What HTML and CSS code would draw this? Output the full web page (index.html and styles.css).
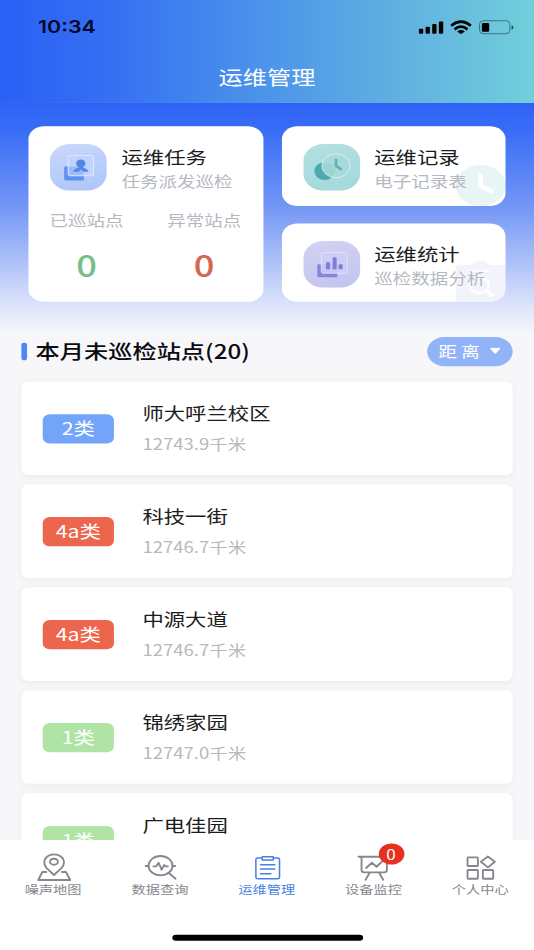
FILE: index.html
```html
<!DOCTYPE html>
<html lang="zh-CN">
<head>
<meta charset="utf-8">
<title>运维管理</title>
<link rel="stylesheet" href="styles.css">
</head>
<body>
<div class="screen">
  <header class="header">
    <div class="status">
      <span class="time">10:34</span>
      <svg class="status-icons" viewBox="450 55 295 50" preserveAspectRatio="none">
        <rect x="455" y="85" width="13" height="15" rx="3"/>
        <rect x="475" y="79" width="13" height="21" rx="3"/>
        <rect x="495" y="71" width="13" height="29" rx="3"/>
        <rect x="515" y="63" width="13" height="37" rx="3"/>
        <g fill="none" stroke="#000" stroke-width="8">
          <path d="M552 76Q581 52 611 76"/>
          <path d="M562 87Q581 71 601 87"/>
        </g>
        <path d="M570 93Q581 85 593 93L584 99Q581 101 578 99Z"/>
        <rect x="637" y="61" width="91" height="39" rx="11" fill="none" stroke="#000" stroke-opacity=".5" stroke-width="2.5"/>
        <rect x="644" y="68" width="22" height="26" rx="4"/>
        <path d="M733 74Q739 76 739 81Q739 86 733 88Z" fill-opacity=".6"/>
      </svg>
    </div>
    <h1 class="title">运维管理</h1>
  </header>

  <main class="content">
    <section class="cards">
      <article class="card task">
        <div class="card-head">
          <svg class="card-icon" viewBox="90 87 171 141" preserveAspectRatio="none">
            <defs><linearGradient id="blue" x1="0" y1="0" x2=".3" y2="1"><stop stop-color="#cbd8fa"/><stop offset="1" stop-color="#b0c8f9"/></linearGradient></defs>
            <rect x="90" y="87" width="171" height="141" rx="62" ry="52" fill="url(#blue)"/>
            <path d="M137 155H192V197H137Q133 197 133 193V159Q133 155 137 155Z" fill="#5f91ef"/>
            <rect x="145" y="122" width="76" height="61" rx="5" fill="#c1d3fb" fill-opacity=".85" stroke="#e9effe" stroke-width="2.5"/>
            <path d="M148 156H191V181H148Z" fill="#83a9f3" fill-opacity=".45"/>
            <ellipse cx="183" cy="146" rx="14" ry="12" fill="#5386e9"/>
            <path d="M177 153H190V159Q205 163 206 171H191L183 164L177 171H160Q162 162 177 159Z" fill="#5386e9"/>
          </svg>
          <div class="card-text">
            <h2>运维任务</h2>
            <p>任务派发巡检</p>
          </div>
        </div>
        <dl class="counts">
          <div><dt>已巡站点</dt><dd class="ok">0</dd></div>
          <div><dt>异常站点</dt><dd class="bad">0</dd></div>
        </dl>
      </article>

      <div class="side">
        <article class="card">
          <svg class="mark" viewBox="557 149 150 123" preserveAspectRatio="none">
            <ellipse cx="632" cy="211" rx="75" ry="62" fill="#b0dede" fill-opacity=".3"/>
            <path d="M632 182V212L664 228" fill="none" stroke="#fff" stroke-width="14" stroke-linecap="round" stroke-linejoin="round"/>
          </svg>
          <div class="card-head">
            <svg class="card-icon" viewBox="99 87 171 141" preserveAspectRatio="none">
              <defs><linearGradient id="teal" x1="0" y1="0" x2=".3" y2="1"><stop stop-color="#b5e0e2"/><stop offset="1" stop-color="#a4dadd"/></linearGradient></defs>
              <rect x="99" y="87" width="171" height="141" rx="62" ry="52" fill="url(#teal)"/>
              <ellipse cx="163" cy="169" rx="31" ry="27" fill="#4daaae"/>
              <ellipse cx="197" cy="153" rx="42" ry="36" fill="#a9d9da" fill-opacity=".87" stroke="#dff4f4" stroke-width="2.5"/>
              <path d="M197 135V153L212 163" fill="none" stroke="#5eb3b7" stroke-width="8" stroke-linecap="round" stroke-linejoin="round"/>
            </svg>
            <div class="card-text">
              <h2>运维记录</h2>
              <p>电子记录表</p>
            </div>
          </div>
        </article>
        <article class="card">
          <svg class="mark" viewBox="557 438 150 123" preserveAspectRatio="none">
            <path d="M557 455Q557 450 564 450H605Q610 450 613 445Q616 439 623 439H640Q647 439 651 445Q653 450 659 450H707V561H557Z" fill="#c8c8ee" fill-opacity=".22"/>
            <path d="M605 468H655" fill="none" stroke="#fff" stroke-opacity=".8" stroke-width="7" stroke-linecap="round"/>
            <ellipse cx="628" cy="511" rx="28" ry="23" fill="none" stroke="#fff" stroke-opacity=".8" stroke-width="9"/>
            <path d="M648 527L666 541" stroke="#fff" stroke-width="10" stroke-linecap="round"/>
          </svg>
          <div class="card-head">
            <svg class="card-icon" viewBox="99 377 171 141" preserveAspectRatio="none">
              <defs><linearGradient id="violet" x1="0" y1="0" x2=".3" y2="1"><stop stop-color="#d2d2f2"/><stop offset="1" stop-color="#c5c6ef"/></linearGradient></defs>
              <rect x="99" y="377" width="171" height="141" rx="62" ry="52" fill="url(#violet)"/>
              <path d="M145 447H201V486H145Q141 486 141 482V451Q141 447 145 447Z" fill="#8684dc"/>
              <rect x="153" y="412" width="78" height="62" rx="5" fill="#cdcef2" fill-opacity=".88" stroke="#e6e6fa" stroke-width="2.5"/>
              <path d="M167 443Q167 441 169 441H177Q179 441 179 443V462H167ZM187 429Q187 426 190 426H196Q199 426 199 429V462H187ZM205 449Q205 447 207 447H215Q217 447 217 449V462H205Z" fill="#7f7cda"/>
            </svg>
            <div class="card-text">
              <h2>运维统计</h2>
              <p>巡检数据分析</p>
            </div>
          </div>
        </article>
      </div>
    </section>

    <section class="stations">
      <div class="section-head">
        <h2>本月未巡检站点(20)</h2>
        <button class="sort" type="button">距 离<svg viewBox="0 0 30 22" preserveAspectRatio="none"><path d="M3 1H27Q31 2 28 5L17 19Q15 21 13 19L2 5Q-1 2 3 1Z" fill="#fff"/></svg></button>
      </div>
      <ul class="list">
        <li><span class="tag blue">2类</span><div><h3>师大呼兰校区</h3><p>12743.9千米</p></div></li>
        <li><span class="tag red">4a类</span><div><h3>科技一街</h3><p>12746.7千米</p></div></li>
        <li><span class="tag red">4a类</span><div><h3>中源大道</h3><p>12746.7千米</p></div></li>
        <li><span class="tag green">1类</span><div><h3>锦绣家园</h3><p>12747.0千米</p></div></li>
        <li><span class="tag green">1类</span><div><h3>广电佳园</h3></div></li>
      </ul>
    </section>
  </main>

  <nav class="tabs">
    <a class="tab">
      <svg viewBox="105 215 110 92" preserveAspectRatio="none">
        <path d="M160 285L139 265Q131 257 131 247C131 215 190 215 190 247Q190 257 182 265Z"/>
        <ellipse cx="160" cy="245" rx="12" ry="9"/>
        <path d="M137 276H125L113 300H209L196 276H184"/>
      </svg>
      <span>噪声地图</span>
    </a>
    <a class="tab">
      <svg viewBox="425.6 215 110 92" preserveAspectRatio="none">
        <ellipse cx="480" cy="257" rx="36" ry="29"/>
        <path d="M435 258H444M516 258H524M505 279L525 296M459 259H467L474 248L483 269L491 255L495 259H502"/>
      </svg>
      <span>数据查询</span>
    </a>
    <a class="tab active">
      <svg viewBox="746 215 110 92" preserveAspectRatio="none">
        <path d="M785 234H771Q766 234 766 239V291Q766 296 771 296H832Q837 296 837 291V239Q837 234 832 234H818M785 230H818V240H785ZM780 254H823M780 267H823M780 281H811"/>
      </svg>
      <span>运维管理</span>
    </a>
    <a class="tab">
      <svg viewBox="265.4 215 110 92" preserveAspectRatio="none">
        <path d="M273 230H368M282 231V270Q282 277 290 277H350Q358 277 358 270V231M296 264L313 248L327 260L346 242M306 279L294 299M335 279L347 299"/>
      </svg>
      <i class="dot">0</i>
      <span>设备监控</span>
    </a>
    <a class="tab">
      <svg viewBox="585.8 215 110 92" preserveAspectRatio="none">
        <rect x="600" y="232" width="31" height="26" rx="2"/>
        <rect x="600" y="270" width="31" height="26" rx="2"/>
        <rect x="646" y="270" width="31" height="26" rx="2"/>
        <path d="M661 229L682 245L661 262L640 245Z"/>
      </svg>
      <span>个人中心</span>
    </a>
    <div class="home"></div>
  </nav>
</div>
</body>
</html>
```
FILE: styles.css
```css
* { box-sizing: border-box; margin: 0; padding: 0; }

html, body { width: 534px; height: 950px; overflow: hidden; }

body { font-family: "Noto Sans CJK SC", sans-serif; color: #1b1c20; }

/* A 375x812 phone layout stretched to fill the window. */
.screen {
  position: relative;
  display: flex;
  flex-direction: column;
  width: 375px;
  height: 812px;
  overflow: hidden;
  transform: scale(1.424, 1.16995);
  transform-origin: 0 0;
  background: #f7f7fa;
}

h1, h2, h3 { font-weight: 400; }

.header {
  flex: none;
  height: 88px;
  background: linear-gradient(90deg, #2a60f5 0%, #356ff3 20%, #4b92ea 48%, #5fade2 72%, #71cfda 100%);
}

.status {
  display: flex;
  align-items: center;
  justify-content: space-between;
  height: 44px;
  padding: 2px 13.3px 0 26.7px;
}

.time { font: 600 15px/20px Inter, sans-serif; color: #05082a; }

.status-icons { width: 69px; height: 14.25px; }

.title { font-size: 17px; line-height: 43px; text-align: center; color: #fff; }

.content {
  flex: 1;
  min-height: 0;
  overflow: hidden;
  background: linear-gradient(180deg, #2e62f6 0, #3a6ef6 25px, #7396f6 88px, #b0c3f8 138px, #e0e6fb 176px, #f7f7fa 198px);
}

.cards { display: flex; gap: 13px; padding: 20px 20.2px 0 19.8px; }

.card {
  position: relative;
  overflow: hidden;
  padding: 15px;
  border-radius: 11px;
  background: #fff;
}

.task { flex: none; width: 164.8px; height: 150px; }

.side { flex: 1; display: grid; grid-template-rows: 68px 67px; gap: 15px; }

.card-head { position: relative; display: flex; gap: 10.5px; }
.side .card-head { gap: 10.2px; }

.card-icon { flex: none; width: 40px; height: 40px; }

.card-text { margin-top: -0.4px; white-space: nowrap; }
.card-text h2 { font-size: 15px; line-height: 22px; }
.card-text p { font-size: 13px; line-height: 19px; color: #b4b8c0; }

.mark { position: absolute; right: 0; bottom: 0; width: 35.1px; height: 35px; }

.counts { display: flex; justify-content: space-between; padding: 14px 0.2px 0 0; }
.counts div { text-align: center; }
.counts dt { font-size: 13px; line-height: 20px; color: #b4b8c0; }
.counts dd { margin-top: 11.5px; font-size: 25.5px; line-height: 34px; font-weight: 500; }
.ok { color: #77bf87; }
.bad { color: #d5664f; }

.section-head {
  display: flex;
  align-items: center;
  justify-content: space-between;
  height: 25px;
  margin: 29.5px 15px 13.5px;
}

.section-head h2 { display: flex; align-items: center; gap: 6px; font-size: 17px; font-weight: 500; line-height: 25px; margin-top: -1px; color: #0b0c0f; }
.section-head h2::before { content: ""; width: 4px; height: 15px; margin-top: 1px; border-radius: 2px; background: #4f86f1; }

.sort {
  display: flex;
  align-items: center;
  justify-content: space-between;
  width: 60px;
  height: 25px;
  padding: 0 8.2px 1.6px 8px;
  border: 0;
  border-radius: 13px;
  background: #91b4f8;
  color: #fff;
  font: 400 13px/23px "Noto Sans CJK SC", sans-serif;
}
.sort svg { width: 7.5px; height: 6px; margin-top: 2.5px; }

.list { display: grid; gap: 8px; margin: 0 15px; list-style: none; }

.list li {
  display: flex;
  gap: 20px;
  height: 80px;
  padding: 0 15px;
  border-radius: 5px;
  background: #fff;
  box-shadow: 0 1px 5px rgba(40, 45, 80, .05);
}

.list h3 { margin-top: 16px; font-size: 15px; line-height: 22px; }
.list p { margin-top: 6px; font-size: 13px; line-height: 19px; color: #b5b9c0; }

.tag {
  width: 50px;
  height: 25px;
  margin-top: 27.8px;
  border-radius: 5px;
  color: #fff;
  font-size: 15px;
  line-height: 23.6px;
  text-align: center;
}
.blue { background: #72a5f9; }
.red { background: #ec664d; }
.green { background: #b0e4a5; }

.tabs { position: relative; flex: none; display: flex; height: 94px; background: #fff; }

.tab { position: relative; display: flex; flex-direction: column; align-items: center; width: 75px; padding-top: 9.7px; color: #85878d; }
.tab svg { width: 25.75px; height: 26.2px; fill: none; stroke: currentColor; stroke-width: 5.6; stroke-linejoin: round; stroke-linecap: round; }
.tab span { margin-left: -0.4px; font-size: 10px; line-height: 12.4px; }
.tab.active { color: #4b7fe5; }
.tab.active svg { stroke-width: 4.6; }

.dot {
  position: absolute;
  top: 2.5px;
  left: 40.6px;
  width: 18px;
  height: 18px;
  border-radius: 50%;
  background: #e8301f;
  color: #fff;
  font-size: 12px;
  font-style: normal;
  line-height: 17.4px;
  text-align: center;
}

.home { position: absolute; left: 120.5px; bottom: 8px; width: 134px; height: 5.5px; border-radius: 3px; background: #000; }
```
